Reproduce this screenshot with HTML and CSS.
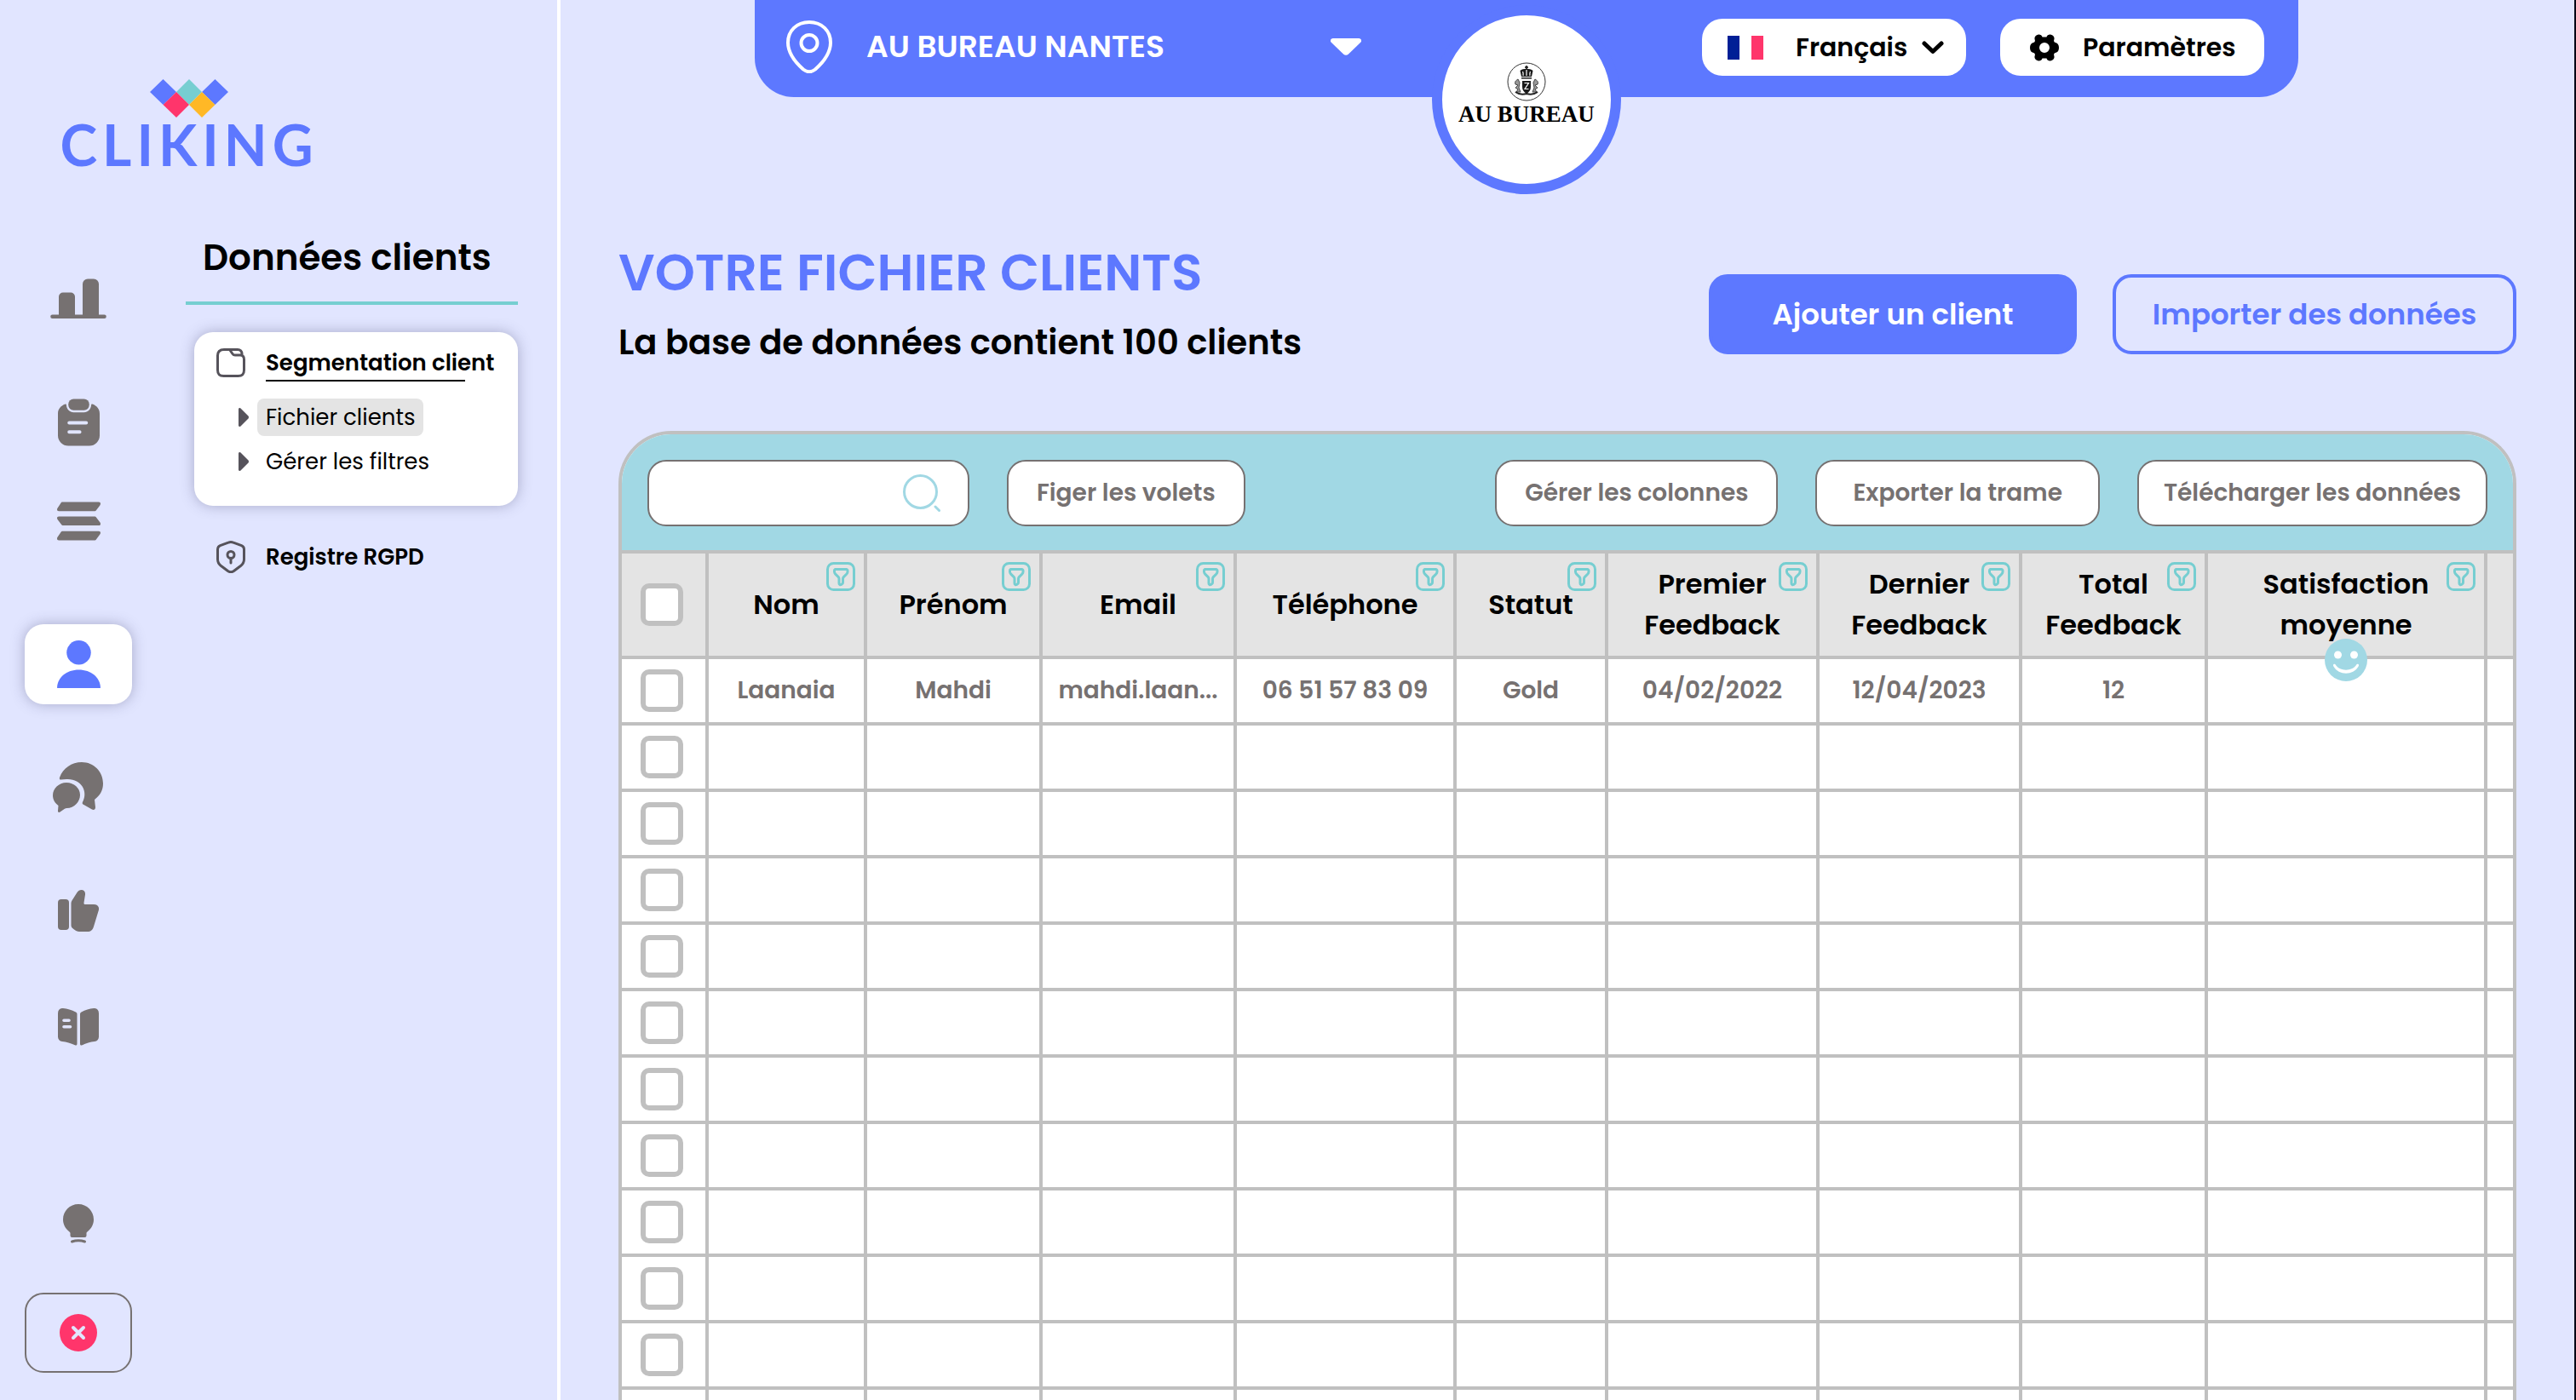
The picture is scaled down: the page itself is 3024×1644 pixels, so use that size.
FILE: index.html
```html
<!DOCTYPE html>
<html lang="fr">
<head>
<meta charset="utf-8">
<meta name="viewport" content="width=device-width, initial-scale=1">
<title>Cliking – Fichier clients</title>
<link rel="stylesheet" href="styles.css">
</head>
<body>
<svg class="sprite" aria-hidden="true">
  <symbol id="filter" viewBox="0 0 34 34">
    <rect x="1.5" y="1.5" width="31" height="31" rx="7"/>
    <path d="M10.500 8.500h13a1.500 1.500 0 0 1 1.500 1.500v1.500c0 1-.6 2-1.300 2.700l-3.200 3.200c-.7.7-1 1.500-1 2.300v4.300c0 .7-.4 1.400-1 1.800l-1 .6c-1.200.7-2.500-.2-2.500-1.500v-5.200c0-.8-.4-1.700-1-2.300l-3.300-3.300c-.7-.7-1.200-1.700-1.200-2.500v-1.600a1.500 1.500 0 0 1 1-1.500z"/>
  </symbol>
</svg>

<aside class="sidebar">
  <a class="brand" href="#">
    <svg class="brand-mark" viewBox="0 0 92 46" aria-hidden="true">
      <path fill="#5d78ff" d="M15.500 1 31 16 15.500 31 0 16zM76.500 1 92 16 76.500 31 61 16z"/>
      <path fill="#76ced1" d="M46 1 61 16 46 31 31 16z"/>
      <path fill="#ff356b" d="M31 16 46 31 31 46 15.500 31z"/>
      <path fill="#ffb826" d="M61 16 76.500 31 61 46 46 31z"/>
    </svg>
    <span class="brand-name">CLIKING</span>
  </a>

  <div class="side-body">
    <nav class="rail" aria-label="Navigation principale">
      <a class="rail-item" href="#" aria-label="Statistiques">
        <svg width="66" height="48" viewBox="0 0 66 47"><path d="M10 42V21a5 5 0 0 1 5-5h9a5 5 0 0 1 5 5v21h9V6a6 6 0 0 1 6-6h7a6 6 0 0 1 6 6v36h6.500a2.300 2.300 0 0 1 0 4.600h-61a2.300 2.300 0 0 1 0-4.600z"/></svg>
      </a>
      <a class="rail-item gap-m" href="#" aria-label="Questionnaires">
        <svg width="49" height="56" viewBox="0 0 48 54"><rect x="12" y="0" width="24" height="13" rx="6"/><path d="M8.500 6c.8-.4 1.200 0 1.200 1 .2 5 4 8.500 8.300 8.500h12c4.500 0 8-3.500 8.300-8.500 0-1 .6-1.400 1.400-1C45 8 48 12 48 17v25a12 12 0 0 1-12 12H12A12 12 0 0 1 0 42V17C0 12 3 8 8.500 6zM13 25.500a2 2 0 0 0 0 4h19.500a2 2 0 0 0 0-4zM13 36a2 2 0 0 0 0 4h12a2 2 0 0 0 0-4z"/></svg>
      </a>
      <a class="rail-item gap-xs" href="#" aria-label="Campagnes">
        <svg width="51" height="46" viewBox="0 0 50 44"><path d="M6 0h42c2 0 2.500 2 1.500 3.500l-4.500 6c-.5.800-1 1-2 1H2c-2 0-2.500-2-1.500-3.500l4-6C5 .3 5.300 0 6 0zM2 16.500h41c1 0 1.500.3 2 1l4.500 6c1 1.500.5 3.500-1.500 3.500H7c-1 0-1.500-.3-2-1l-4.500-6c-1-1.500-.5-3.500 1.500-3.500zM6 33.500h42c2 0 2.500 2 1.500 3.500l-4.500 6c-.5.700-1 1-2 1H2c-2 0-2.500-2-1.500-3.500l4-6c.5-.7.800-1 1.500-1z"/></svg>
      </a>
      <a class="rail-item rail-item-active gap-l" href="#" aria-label="Clients" aria-current="page">
        <svg width="51" height="57" viewBox="0 0 50 56"><circle cx="25" cy="14" r="14"/><path d="M0 55c0-12 11-21 25-21s25 9 25 21z"/></svg>
      </a>
      <a class="rail-item gap-m" href="#" aria-label="Messages">
        <svg width="60" height="60" viewBox="0 0 60 60"><path d="M8 18C12 7 22 0 34 0c14 0 25 11 25 25 0 8-3.500 14-10 19l1 9c0 2.500-1.800 3.500-4 2.500l-10.500-6c-1-.7-1-1.500-.6-2.500C42 34 33 19 16 20l-6.500.6c-1.500.2-2-1-1.500-2.600z"/><path d="M16 24c9 0 16 6.500 16 14.500S25 54 16.500 54c-1 0-2 .5-3 1l-5 3.500c-1.500.9-2.700.2-2.500-1.500l.5-6C2.500 48 0 44 0 39c0-8 7-15 16-15z"/></svg>
      </a>
      <a class="rail-item gap-m" href="#" aria-label="Avis">
        <svg width="48" height="50" viewBox="0 0 48 50"><rect x="0" y="11" width="13" height="36" rx="4"/><path d="M15.500 16c0-1.500.4-2.700 1.300-4L22.500 3C23.800 1 25.500 0 27.500 0c3 0 5 2.500 4.500 5.500l-1.500 9.500c-.2 1.300.5 2 1.800 2H42c4.500 0 7 3 5.800 7L42 43c-1.300 4-3.300 6-7.500 6H25c-2.500 0-4-1-6-2.500-2.300-1.600-3.500-3-3.500-5z"/></svg>
      </a>
      <a class="rail-item gap-s" href="#" aria-label="Guide">
        <svg width="48" height="44" viewBox="0 0 48 44"><path d="M6 0c5 .5 10 2 15 4.500 1 .5 1.500 1.200 1.500 2.500v34.500c0 1.800-1 2.500-2.500 1.800C15 41 10 39.500 5 39c-3-.3-5-2.500-5-5.500V6c0-4 2.500-6.300 6-6zM7 12.500a1.800 1.800 0 0 0 0 3.600h6a1.800 1.800 0 0 0 0-3.600zm0 7.500a1.800 1.800 0 0 0 0 3.600h7.500a1.800 1.800 0 0 0 0-3.600zM42 0c-5 .5-10 2-14.500 4.500-1 .5-1.500 1.200-1.500 2.500v34.500c0 1.800 1 2.500 2.500 1.800C33 41 38 39.500 43 39c3-.3 5-2.500 5-5.500V6c0-4-2.500-6.300-6-6z"/></svg>
      </a>
      <a class="rail-item gap-xl" href="#" aria-label="Astuces">
        <svg width="36" height="46" viewBox="0 0 36 46"><path d="M18 0c10 0 18 8 18 18 0 6-3 11-7.500 14.500-.9.700-1 1-1 2V37a2 2 0 0 1-2 2h-15a2 2 0 0 1-2-2v-2.500c0-1-.2-1.300-1-2C3 29 0 24 0 18 0 8 8 0 18 0z"/><path class="bulb-base" d="M10.500 44q7.500-2.300 15 0"/></svg>
      </a>
      <button class="rail-item rail-close" type="button" aria-label="Fermer">
        <svg width="44" height="44" viewBox="0 0 44 44"><circle cx="22" cy="22" r="22"/><path class="cross" d="M16 16l12 12M28 16 16 28"/></svg>
      </button>
    </nav>

    <div class="submenu">
      <h2 class="submenu-title">Données clients</h2>
      <div class="menu-card">
        <a class="menu-head" href="#">
          <svg width="34" height="34" viewBox="0 0 34 34"><path d="M9 1.500h6.500l3.500 5c.8 1.200 1.500 1.500 3 1.500H28c3 0 4.500 2 4.500 5v12.500c0 5-2 7-7 7h-17c-5 0-7-2-7-7v-17c0-5 2.500-7 7.500-7zM15.500 1.500H25c3 0 5 2 5 5V8"/></svg>
          <span class="menu-label">Segmentation client</span>
        </a>
        <ul class="menu-list">
          <li><svg class="arrow" width="12" height="22" viewBox="0 0 12 22"><path d="M0 1.500C0 0 1.500-.5 2.500.5l9 9c.7.800.7 2.200 0 3l-9 9C1.500 22.500 0 22 0 20.500z"/></svg><a class="menu-link menu-link-current" href="#">Fichier clients</a></li>
          <li><svg class="arrow" width="12" height="22" viewBox="0 0 12 22"><path d="M0 1.500C0 0 1.500-.5 2.500.5l9 9c.7.800.7 2.200 0 3l-9 9C1.500 22.500 0 22 0 20.500z"/></svg><a class="menu-link" href="#">Gérer les filtres</a></li>
        </ul>
      </div>
      <a class="menu-head menu-register" href="#">
        <svg width="34" height="38" viewBox="0 0 34 38"><path d="M14 2.200 4.500 5.700C2.500 6.500 1.500 8 1.500 10v12c0 3 1.500 5.500 4 7.500l8 6c2 1.400 5 1.400 7 0l8-6c2.500-2 4-4.500 4-7.500V10c0-2-1-3.500-3-4.300L20 2.200c-2-.8-4-.8-6 0z"/><circle cx="17" cy="16.500" r="4"/><path d="M17 20.500V26"/></svg>
        <span class="menu-label">Registre RGPD</span>
      </a>
    </div>
  </div>
</aside>

<main class="main">
  <header class="topbar">
    <div class="place">
      <svg width="54" height="62" viewBox="0 0 54 62" aria-hidden="true"><path d="M27 2C12 2 2 12.500 2 26c0 12 9 23.500 18 31.500 4.500 3.500 9.500 3.500 14 0C43 49.500 52 38 52 26 52 12.500 42 2 27 2z"/><circle cx="27" cy="26.500" r="9.500"/></svg>
      <select class="place-select" aria-label="Établissement"><option>AU BUREAU NANTES</option></select>
      <svg class="caret" width="36" height="20" viewBox="0 0 36 20" aria-hidden="true"><path d="M3 0h30c3 0 4 3 2 5L21 18.500c-2 1.600-4 1.600-6 0L1 5C-1 3 0 0 3 0z"/></svg>
    </div>
    <div class="client-logo">
      <svg width="46" height="46" viewBox="0 0 46 46" aria-hidden="true">
        <circle cx="23" cy="23" r="22" fill="none" stroke="#333" stroke-width="1"/>
        <path d="M23 4v4M21 6h4" stroke="#111" stroke-width="1.500"/>
        <path d="M15.500 10c3-3 12-3 15 0l-1.500 7H17zM17 18h12v1.500H17zM18 22h10v7c0 4-2 6-5 8-3-2-5-4-5-8z" fill="#1a1a1a"/>
        <path d="M18.500 11c1 2 1 3 .5 5M23 9v7M27.500 11c-1 2-1 3-.5 5M20.500 24.500h5l-4.500 7h4.500" fill="none" stroke="#fff" stroke-width="1.200"/>
        <path d="M13 20c-3 2-4 3-3 6l3 1-3 3 3 2-2 3h5l-2-5 1-6zM33 20c3 2 4 3 3 6l-3 1 3 3-3 2 2 3h-5l2-5-1-6z" fill="#999" stroke="#444" stroke-width="1"/>
        <path d="M10 35c4 3 9 3 13 2 4 1 9 1 13-2" fill="none" stroke="#222" stroke-width="2"/>
      </svg>
      <span class="client-name">AU BUREAU</span>
    </div>
    <div class="top-actions">
      <div class="pill">
        <svg class="flag" width="42" height="28" viewBox="0 0 42 28" aria-hidden="true"><path fill="#001f96" d="M0 0h14v28H0z"/><path fill="#fff" d="M14 0h14v28H14z"/><path fill="#ff356b" d="M28 0h14v28H28z"/></svg>
        <select class="lang-select" aria-label="Langue"><option>Français</option></select>
        <svg class="chevron" width="26" height="16" viewBox="0 0 26 16" aria-hidden="true"><path d="m3 3 10 9.500L23 3"/></svg>
      </div>
      <button class="pill" type="button">
        <svg class="gear" width="34" height="32" viewBox="0 0 34 32" aria-hidden="true"><path fill-rule="evenodd" d="M14.500 3.500C14 1 10.500-.5 8 1.200 5.500 2.700 5 4.500 5.800 7c.4 1.500-.3 2.700-1.800 3C1.500 10.500 0 12.500 0 16s1.500 5.500 4 6c1.500.3 2.200 1.500 1.800 3C5 27.500 5.500 29.300 8 30.800c2.500 1.700 6 .2 6.500-2.300h5c.5 2.500 4 4 6.500 2.300 2.500-1.500 3-3.300 2.200-5.800-.4-1.500.3-2.700 1.800-3 2.500-.5 4-2.500 4-6s-1.500-5.500-4-6c-1.500-.3-2.200-1.500-1.800-3C29 4.500 28.500 2.700 26 1.200 23.500-.5 20 1 19.500 3.500zM17 10a6 6 0 1 1 0 12 6 6 0 0 1 0-12z"/></svg>
        <span>Paramètres</span>
      </button>
    </div>
  </header>

  <section class="heading">
    <div class="titles">
      <h1 class="title">VOTRE FICHIER CLIENTS</h1>
      <p class="subtitle">La base de données contient 100 clients</p>
    </div>
    <div class="heading-actions">
      <button class="btn btn-primary" type="button">Ajouter un client</button>
      <button class="btn btn-outline" type="button">Importer des données</button>
    </div>
  </section>

  <section class="panel">
    <div class="toolbar">
      <label class="search">
        <input class="search-input" type="search" aria-label="Rechercher un client">
        <svg width="44" height="44" viewBox="0 0 44 44" aria-hidden="true"><circle cx="20.500" cy="20.500" r="19"/><path d="m38 38 4.500 4.500"/></svg>
      </label>
      <button class="tool" type="button">Figer les volets</button>
      <div class="tool-group">
        <button class="tool" type="button">Gérer les colonnes</button>
        <button class="tool tool-wide" type="button">Exporter la trame</button>
        <button class="tool tool-tight" type="button">Télécharger les données</button>
      </div>
    </div>
    <table class="clients">
      <colgroup>
        <col class="c-check"><col class="c-nom"><col class="c-prenom"><col class="c-email"><col class="c-tel"><col class="c-statut"><col class="c-first"><col class="c-last"><col class="c-total"><col class="c-satis"><col class="c-end">
      </colgroup>
      <thead>
        <tr>
          <th><input type="checkbox" aria-label="Tout sélectionner"></th>
          <th>Nom<button class="filter" type="button" aria-label="Filtrer par nom"><svg><use href="#filter"/></svg></button></th>
          <th>Prénom<button class="filter" type="button" aria-label="Filtrer par prénom"><svg><use href="#filter"/></svg></button></th>
          <th>Email<button class="filter" type="button" aria-label="Filtrer par email"><svg><use href="#filter"/></svg></button></th>
          <th>Téléphone<button class="filter" type="button" aria-label="Filtrer par téléphone"><svg><use href="#filter"/></svg></button></th>
          <th>Statut<button class="filter" type="button" aria-label="Filtrer par statut"><svg><use href="#filter"/></svg></button></th>
          <th>Premier<br>Feedback<button class="filter" type="button" aria-label="Filtrer par premier feedback"><svg><use href="#filter"/></svg></button></th>
          <th>Dernier<br>Feedback<button class="filter" type="button" aria-label="Filtrer par dernier feedback"><svg><use href="#filter"/></svg></button></th>
          <th>Total<br>Feedback<button class="filter" type="button" aria-label="Filtrer par total feedback"><svg><use href="#filter"/></svg></button></th>
          <th>Satisfaction<br>moyenne<button class="filter" type="button" aria-label="Filtrer par satisfaction"><svg><use href="#filter"/></svg></button></th>
          <th></th>
        </tr>
      </thead>
      <tbody>
        <tr>
          <td><input type="checkbox" aria-label="Sélectionner Mahdi Laanaia"></td>
          <td>Laanaia</td><td>Mahdi</td><td>mahdi.laan...</td><td>06 51 57 83 09</td><td>Gold</td><td>04/02/2022</td><td>12/04/2023</td><td>12</td>
          <td><svg class="smiley" width="50" height="50" viewBox="0 0 50 50" role="img" aria-label="Satisfait"><circle cx="25" cy="25" r="25" fill="#a1d8e4"/><g fill="#fff"><circle cx="15.500" cy="19" r="4.500"/><circle cx="34.500" cy="19" r="4.500"/><path d="M10.500 30c1-.7 2 0 2.500 1 5 7.500 19 7.500 24 0 .5-1 1.500-1.700 2.500-1 .8.600.5 1.800 0 2.800-6 10.500-23 10.500-29 0-.5-1-.8-2.200 0-2.800z"/></g></svg></td>
          <td></td>
        </tr>
        <tr><td><input type="checkbox" aria-label="Sélectionner la ligne 2"></td><td></td><td></td><td></td><td></td><td></td><td></td><td></td><td></td><td></td><td></td></tr>
        <tr><td><input type="checkbox" aria-label="Sélectionner la ligne 3"></td><td></td><td></td><td></td><td></td><td></td><td></td><td></td><td></td><td></td><td></td></tr>
        <tr><td><input type="checkbox" aria-label="Sélectionner la ligne 4"></td><td></td><td></td><td></td><td></td><td></td><td></td><td></td><td></td><td></td><td></td></tr>
        <tr><td><input type="checkbox" aria-label="Sélectionner la ligne 5"></td><td></td><td></td><td></td><td></td><td></td><td></td><td></td><td></td><td></td><td></td></tr>
        <tr><td><input type="checkbox" aria-label="Sélectionner la ligne 6"></td><td></td><td></td><td></td><td></td><td></td><td></td><td></td><td></td><td></td><td></td></tr>
        <tr><td><input type="checkbox" aria-label="Sélectionner la ligne 7"></td><td></td><td></td><td></td><td></td><td></td><td></td><td></td><td></td><td></td><td></td></tr>
        <tr><td><input type="checkbox" aria-label="Sélectionner la ligne 8"></td><td></td><td></td><td></td><td></td><td></td><td></td><td></td><td></td><td></td><td></td></tr>
        <tr><td><input type="checkbox" aria-label="Sélectionner la ligne 9"></td><td></td><td></td><td></td><td></td><td></td><td></td><td></td><td></td><td></td><td></td></tr>
        <tr><td><input type="checkbox" aria-label="Sélectionner la ligne 10"></td><td></td><td></td><td></td><td></td><td></td><td></td><td></td><td></td><td></td><td></td></tr>
        <tr><td><input type="checkbox" aria-label="Sélectionner la ligne 11"></td><td></td><td></td><td></td><td></td><td></td><td></td><td></td><td></td><td></td><td></td></tr>
        <tr><td><input type="checkbox" aria-label="Sélectionner la ligne 12"></td><td></td><td></td><td></td><td></td><td></td><td></td><td></td><td></td><td></td><td></td></tr>
      </tbody>
    </table>
  </section>
</main>
</body>
</html>
```
FILE: styles.css
```css
:root {
  --blue: #5d78ff;
  --bg: #e1e5ff;
  --aqua: #a1d8e4;
  --teal: #76ced1;
  --grey: #767171;
  --line: #c0c0c0;
  --pink: #ff356b;
}

*, *::before, *::after { box-sizing: border-box; }

body {
  margin: 0;
  height: 100vh;
  display: flex;
  overflow: hidden;
  border-right: 2px solid #000014;
  background: var(--bg);
  color: #000;
  font-family: Poppins, Inter, "Open Sans", sans-serif;
  font-size: 28px;
  font-weight: 600;
}

h1, h2, p, ul { margin: 0; padding: 0; font-weight: 600; }
ul { list-style: none; }
a { color: inherit; text-decoration: none; }
button, select, input { font: inherit; color: inherit; margin: 0; }
button { cursor: pointer; }
svg { display: block; flex: none; }
.sprite { position: absolute; width: 0; height: 0; }

/* Sidebar */
.sidebar {
  flex: 0 0 658px;
  border-right: 4px solid #fff;
}
.brand {
  display: flex;
  flex-direction: column;
  align-items: center;
  width: 300px;
  margin: 92px 0 0 72px;
}
.brand-mark { width: 92px; height: 46px; }
.brand-name {
  font-family: Lato, sans-serif;
  font-size: 66px;
  font-weight: 700;
  line-height: 64px;
  letter-spacing: 6px;
  color: var(--blue);
}
.side-body { display: flex; margin-top: 74px; }

.rail {
  display: flex;
  flex-direction: column;
  align-items: center;
  width: 184px;
  margin-top: 28px;
}
.rail-item {
  display: flex;
  align-items: center;
  justify-content: center;
  width: 126px;
  height: 94px;
  border-radius: 22px;
}
.rail-item svg { fill: var(--grey); }
.rail-item-active { background: #fff; box-shadow: 0 0 16px rgba(60, 60, 100, .35); }
.rail-item-active svg { fill: var(--blue); }
.rail-close { margin-top: 34px; background: none; border: 2px solid var(--grey); padding: 0; }
.rail-close svg { fill: var(--pink); }
.cross { fill: none; stroke: var(--bg); stroke-width: 4; stroke-linecap: round; }
.bulb-base { fill: none; stroke: var(--grey); stroke-width: 3; stroke-linecap: round; }
.gap-xs { margin-top: 22px; }
.gap-s { margin-top: 42px; }
.gap-m { margin-top: 51px; }
.gap-l { margin-top: 74px; }
.gap-xl { margin-top: 137px; }

.submenu { width: 390px; margin-left: 34px; }
.submenu-title {
  padding: 0 0 24px 20px;
  border-bottom: 4px solid var(--teal);
  font-size: 42px;
  line-height: 54px;
  white-space: nowrap;
}
.menu-card {
  margin: 32px 0 0 10px;
  height: 204px;
  padding-top: 14px;
  border-radius: 22px;
  background: #fff;
  box-shadow: 0 0 16px rgba(60, 60, 100, .35);
}
.menu-head {
  display: flex;
  align-items: center;
  gap: 24px;
  padding-left: 26px;
  font-size: 26px;
  line-height: 44px;
  white-space: nowrap;
}
.menu-head svg { fill: none; stroke: #56535b; stroke-width: 3; stroke-linecap: round; stroke-linejoin: round; }
.menu-card .menu-label {
  background: linear-gradient(#000, #000) left 42px / 234px 2px no-repeat;
}
.menu-list { padding: 20px 0 0 52px; }
.menu-list li { display: flex; align-items: center; gap: 10px; margin-bottom: 8px; }
.arrow { fill: #56535b; }
.menu-link {
  padding: 0 10px;
  border-radius: 8px;
  font-size: 26px;
  font-weight: 400;
  line-height: 44px;
  white-space: nowrap;
}
.menu-link-current { background: #e4e4e4; }
.menu-register { margin-top: 38px; padding-left: 36px; }

/* Main column */
.main {
  flex: 1;
  min-width: 0;
  display: flex;
  flex-direction: column;
  padding: 0 68px;
}

.topbar {
  position: relative;
  flex: none;
  display: flex;
  align-items: flex-start;
  justify-content: space-between;
  height: 114px;
  margin: 0 256px 0 160px;
  padding: 22px 40px 0 37px;
  border-radius: 0 0 46px 46px;
  background: var(--blue);
}
.place { display: flex; align-items: center; color: #fff; }
.place > svg { fill: none; stroke: #fff; stroke-width: 4; }
.place select, .pill select {
  appearance: none;
  border: 0;
  padding: 0;
  background: transparent;
}
.place-select { width: 545px; margin-left: 40px; font-size: 36px; line-height: 66px; }
.place .caret { fill: #fff; stroke: none; }
.client-logo {
  position: absolute;
  top: 6px;
  left: 50%;
  transform: translateX(-50%);
  display: flex;
  flex-direction: column;
  align-items: center;
  width: 222px;
  height: 222px;
  padding-top: 55px;
  border: 12px solid var(--blue);
  border-radius: 50%;
  background: #fff;
}
.client-name {
  font-family: "Liberation Serif", serif;
  font-size: 27px;
  font-weight: 700;
  line-height: 30px;
  white-space: nowrap;
}
.top-actions { display: flex; gap: 40px; }
.pill {
  display: flex;
  align-items: center;
  width: 310px;
  height: 67px;
  padding: 0 0 0 30px;
  border: 0;
  border-radius: 24px;
  background: #fff;
  font-size: 30px;
}
.lang-select { width: 138px; margin: 0 10px 0 38px; }
.chevron { fill: none; stroke: #000; stroke-width: 5; stroke-linecap: round; stroke-linejoin: round; }
.gear { margin: 0 28px 0 5px; }

.heading {
  flex: none;
  display: flex;
  align-items: flex-end;
  justify-content: space-between;
  margin: 166px 0 76px;
}
.titles { white-space: nowrap; }
.title { font-size: 60px; line-height: 80px; color: var(--blue); }
.subtitle { margin-top: 14px; font-size: 40px; line-height: 56px; }
.heading-actions { display: flex; gap: 42px; margin-bottom: 14px; }
.btn {
  height: 94px;
  border: 4px solid var(--blue);
  border-radius: 22px;
  font-size: 34px;
}
.btn-primary { width: 432px; background: var(--blue); color: #fff; }
.btn-outline { width: 474px; background: transparent; color: var(--blue); }

/* Client table */
.panel {
  flex: 1;
  min-height: 0;
  overflow: hidden;
  border: 4px solid var(--line);
  border-bottom: 0;
  border-radius: 62px 62px 0 0;
  background: #fff;
}
.toolbar {
  display: flex;
  gap: 44px;
  padding: 30px 30px 28px;
  border-bottom: 4px solid var(--line);
  background: var(--aqua);
  color: var(--grey);
}
.tool-group { display: flex; gap: 44px; margin-left: auto; }
.search, .tool {
  height: 78px;
  border: 2px solid var(--grey);
  border-radius: 22px;
  background: #fff;
}
.tool { padding: 0 33px; white-space: nowrap; }
.tool-wide { padding: 0 42px; }
.tool-tight { padding: 0 29px; }
.search { display: flex; align-items: center; width: 378px; padding: 0 32px 0 24px; }
.search-input { flex: 1; min-width: 0; border: 0; outline: 0; background: transparent; }
.search svg { fill: none; stroke: var(--aqua); stroke-width: 3; stroke-linecap: round; }

.clients {
  width: 100%;
  table-layout: fixed;
  border-collapse: separate;
  border-spacing: 0;
  text-align: center;
}
.c-check { width: 102px; }
.c-nom { width: 186px; }
.c-prenom { width: 206px; }
.c-email { width: 228px; }
.c-tel { width: 258px; }
.c-statut { width: 178px; }
.c-first { width: 248px; }
.c-last { width: 238px; }
.c-total { width: 218px; }
.c-satis { width: 328px; }
.c-end { width: 30px; }

.clients th, .clients td {
  position: relative;
  padding: 0;
  border-right: 4px solid var(--line);
  border-bottom: 4px solid var(--line);
  vertical-align: middle;
  white-space: nowrap;
}
.clients th:first-child, .clients td:first-child { padding-right: 4px; }
.clients th:last-child, .clients td:last-child { border-right: 0; }
.clients th {
  height: 124px;
  background: #e4e4e4;
  font-size: 32px;
  font-weight: 600;
  line-height: 48px;
}
.clients td { height: 78px; color: var(--grey); }
.clients input {
  appearance: none;
  display: block;
  width: 50px;
  height: 50px;
  margin: 0 auto;
  border: 6px solid var(--line);
  border-radius: 10px;
  background: #fff;
}
.filter {
  position: absolute;
  top: 10px;
  right: 10px;
  padding: 0;
  border: 0;
  background: none;
}
.filter svg { width: 34px; height: 34px; fill: none; stroke: var(--teal); stroke-width: 3; }
.smiley { position: absolute; top: -24px; left: 50%; transform: translateX(-50%); }
```
